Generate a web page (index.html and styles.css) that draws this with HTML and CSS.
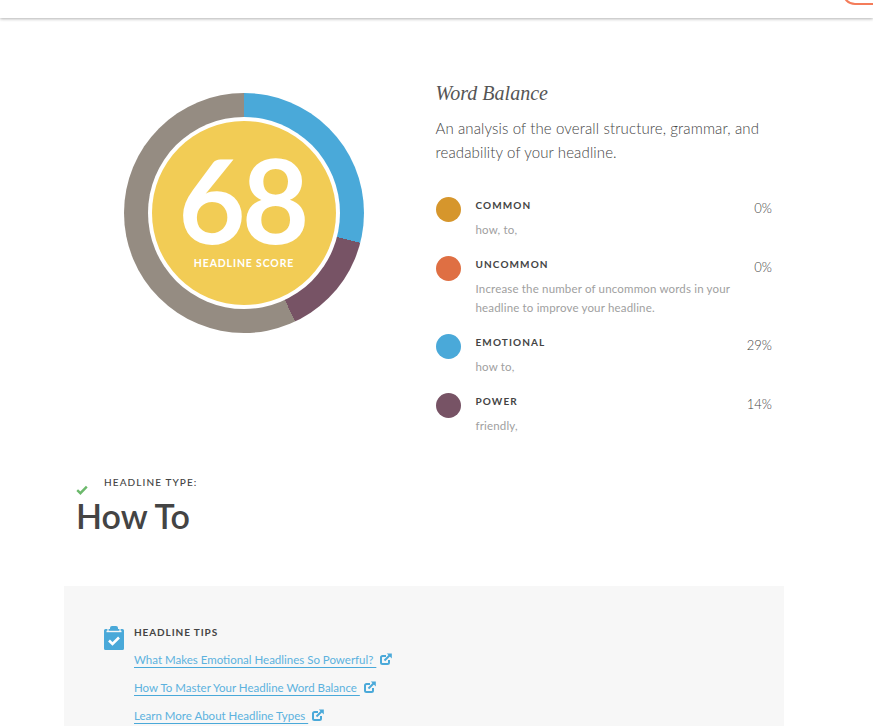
FILE: index.html
```html
<!DOCTYPE html>
<html lang="en">
<head>
<meta charset="utf-8">
<title>Headline Score</title>
<link rel="stylesheet" href="styles.css">
</head>
<body>
<header class="topbar"><span class="topbar-btn"></span></header>
<main class="page">
  <section class="balance">
    <div class="donut-col">
      <div class="donut">
        <div class="donut-gap">
          <div class="donut-core">
            <div class="score">68</div>
            <div class="score-label">HEADLINE SCORE</div>
          </div>
        </div>
      </div>
    </div>
    <div class="words">
      <h2 class="words-title">Word Balance</h2>
      <p class="words-intro">An analysis of the overall structure, grammar, and readability of your headline.</p>
      <ul class="word-list">
        <li class="word-row">
          <span class="dot dot-common"></span>
          <div class="word-body"><div class="word-name">COMMON</div><p class="word-note">how, to,</p></div>
          <span class="word-pct">0%</span>
        </li>
        <li class="word-row">
          <span class="dot dot-uncommon"></span>
          <div class="word-body"><div class="word-name">UNCOMMON</div><p class="word-note">Increase the number of uncommon words in your headline to improve your headline.</p></div>
          <span class="word-pct">0%</span>
        </li>
        <li class="word-row">
          <span class="dot dot-emotional"></span>
          <div class="word-body"><div class="word-name">EMOTIONAL</div><p class="word-note">how to,</p></div>
          <span class="word-pct">29%</span>
        </li>
        <li class="word-row">
          <span class="dot dot-power"></span>
          <div class="word-body"><div class="word-name">POWER</div><p class="word-note">friendly,</p></div>
          <span class="word-pct">14%</span>
        </li>
      </ul>
    </div>
  </section>
  <section class="type">
    <svg class="type-check" viewBox="0 0 12 10" width="12" height="10"><path d="M1.2 5.2 4.4 8.2 10.8 1.6" fill="none" stroke="#6cb96c" stroke-width="2.4"/></svg>
    <div>
      <div class="type-label">HEADLINE TYPE:</div>
      <div class="type-name">How To</div>
    </div>
  </section>
  <section class="tips">
    <svg class="tips-icon" viewBox="0 0 20 24" width="20" height="24">
      <path d="M1.5 3H6V2a2 2 0 0 1 2-2h4a2 2 0 0 1 2 2v1h4.500A1.500 1.500 0 0 1 20 4.500v18a1.500 1.500 0 0 1-1.500 1.500h-17A1.500 1.500 0 0 1 0 22.500v-18A1.500 1.500 0 0 1 1.500 3Z" fill="#4aa9d9"/>
      <path d="M2.500 5.500h15" stroke="#f7f7f7" stroke-width="1.400"/>
      <path d="M4 2.800v3M16 2.800v3" stroke="#f7f7f7" stroke-width="1.200"/>
      <path d="M5 14.500 8.500 18 15 11.500" fill="none" stroke="#fff" stroke-width="2.600"/>
    </svg>
    <div class="tips-body">
      <div class="tips-title">HEADLINE TIPS</div>
      <div class="tip"><a class="tip-link" href="#">What Makes Emotional Headlines So Powerful? </a><svg class="ext" viewBox="0 0 12 12" width="12" height="12"><path d="M9 7v2.500A1.500 1.500 0 0 1 7.500 11h-5A1.500 1.500 0 0 1 1 9.500v-5A1.500 1.500 0 0 1 2.500 3H6" fill="none" stroke="#4aa9d9" stroke-width="2"/><path d="M4.500 7.500 10 2" stroke="#4aa9d9" stroke-width="2"/><path d="M6.800 0.500h5v5Z" fill="#4aa9d9"/></svg></div>
      <div class="tip"><a class="tip-link" href="#">How To Master Your Headline Word Balance </a><svg class="ext" viewBox="0 0 12 12" width="12" height="12"><path d="M9 7v2.500A1.500 1.500 0 0 1 7.500 11h-5A1.500 1.500 0 0 1 1 9.500v-5A1.500 1.500 0 0 1 2.500 3H6" fill="none" stroke="#4aa9d9" stroke-width="2"/><path d="M4.500 7.500 10 2" stroke="#4aa9d9" stroke-width="2"/><path d="M6.800 0.500h5v5Z" fill="#4aa9d9"/></svg></div>
      <div class="tip"><a class="tip-link" href="#">Learn More About Headline Types </a><svg class="ext" viewBox="0 0 12 12" width="12" height="12"><path d="M9 7v2.500A1.500 1.500 0 0 1 7.500 11h-5A1.500 1.500 0 0 1 1 9.500v-5A1.500 1.500 0 0 1 2.500 3H6" fill="none" stroke="#4aa9d9" stroke-width="2"/><path d="M4.500 7.500 10 2" stroke="#4aa9d9" stroke-width="2"/><path d="M6.800 0.500h5v5Z" fill="#4aa9d9"/></svg></div>
    </div>
  </section>
</main>
</body>
</html>
```
FILE: styles.css
```css
* { box-sizing: border-box; }
html, body { margin: 0; padding: 0; height: 726px; overflow: hidden; background: #fff; }
body { font-family: "Lato", "Liberation Sans", sans-serif; color: #444; }
.topbar { height: 18px; background: #fff; box-shadow: 0 1px 3px rgba(0,0,0,.3); display: flex; justify-content: flex-end; overflow: hidden; }
.topbar-btn { width: 64px; height: 26px; margin-top: -21px; margin-right: -33px; border: 2px solid #f47c5a; border-radius: 13px; flex: none; }
.page { padding-left: 64px; width: 784px; }
.balance { display: flex; padding-left: 60px; height: 457px; }
.donut-col { width: 311.5px; padding-top: 75px; flex: none; }
.donut { width: 240px; height: 240px; border-radius: 50%; background: conic-gradient(#4aa9d9 0 29%, #775365 29% 43%, #958c82 43% 100%); padding: 24px; }
.donut-gap { width: 192px; height: 192px; border-radius: 50%; background: #fff; padding: 4px; }
.donut-core { width: 184px; height: 184px; border-radius: 50%; background: #f2cc55; color: #fff; text-align: center; }
.score { font-size: 116px; font-weight: 700; line-height: 86px; padding: 36px 4px 0 0; letter-spacing: -3.5px; }
.score-label { font-size: 10.5px; font-weight: 700; letter-spacing: 0.85px; line-height: 14px; margin-top: 13px; }
.words { width: 336.5px; flex: none; padding-top: 62px; }
.words-title { margin: 0; font-family: "Liberation Serif", serif; font-style: italic; font-weight: 400; font-size: 20px; line-height: 26px; color: #555; }
.words-intro { margin: 10px 0 0; font-size: 15px; font-weight: 300; letter-spacing: 0.12px; line-height: 24px; color: #444; }
.word-list { list-style: none; margin: 33px 0 0; padding: 0; }
.word-row { display: flex; align-items: flex-start; margin-bottom: 17px; }
.dot { width: 25px; height: 25px; border-radius: 50%; flex: none; margin-right: 15px; }
.dot-common { background: #d6962c; }
.dot-uncommon { background: #df6f43; }
.dot-emotional { background: #4aa9d9; }
.dot-power { background: #775365; }
.word-body { flex: 1; }
.word-name { font-size: 10px; font-weight: 700; letter-spacing: 1.1px; line-height: 16px; color: #444; }
.word-note { margin: 7px 0 0; width: 265px; font-size: 11.5px; font-weight: 400; letter-spacing: 0.17px; line-height: 19px; color: #a0a0a0; }
.word-pct { font-size: 13px; font-weight: 300; line-height: 22px; color: #444; }
.type { display: flex; align-items: flex-start; padding-left: 12px; }
.type-check { flex: none; margin-top: 10px; margin-right: 16px; }
.type-label { font-size: 10px; font-weight: 500; letter-spacing: 1.1px; line-height: 14px; color: #444; }
.type-name { margin-left: -28px; font-size: 34px; font-weight: 600; line-height: 40px; margin-top: 7px; color: #444; }
.tips { display: flex; width: 720px; height: 200px; margin-top: 50px; padding: 40px 40px 0; background: #f7f7f7; }
.tips-icon { flex: none; margin-right: 10px; }
.tips-title { font-size: 10px; font-weight: 700; letter-spacing: 0.9px; line-height: 14px; color: #444; margin-top: -1px; margin-bottom: 6px; }
.tip { display: flex; align-items: center; gap: 5px; height: 28px; font-size: 11.5px; }
.tip-link { color: #5cb2de; text-decoration: underline #4aa9d9; text-underline-offset: 3px; white-space: pre; }
.ext { flex: none; margin-left: -1px; }
```
